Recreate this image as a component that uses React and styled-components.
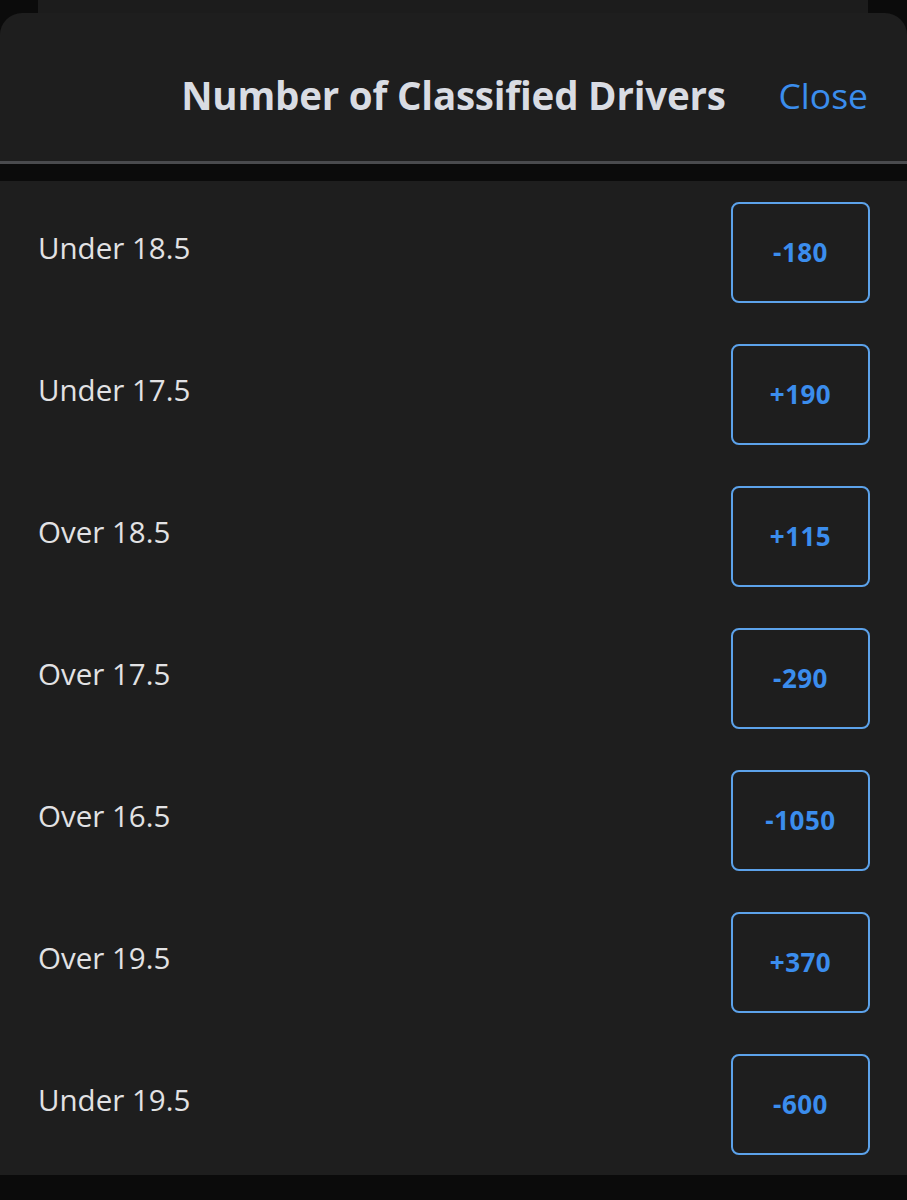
import React from "react";
import styled, {createGlobalStyle} from "styled-components";

const GlobalStyle = createGlobalStyle`
    html, body {
        margin: 0;
        padding: 0;
        background: #0b0b0b;
    }
    body {
        font-family: "Open Sans", "Noto Sans", sans-serif;
        -webkit-font-smoothing: antialiased;
    }
`;

const markets = [
    {label: "Under 18.5", odds: "-180"},
    {label: "Under 17.5", odds: "+190"},
    {label: "Over 18.5", odds: "+115"},
    {label: "Over 17.5", odds: "-290"},
    {label: "Over 16.5", odds: "-1050"},
    {label: "Over 19.5", odds: "+370"},
    {label: "Under 19.5", odds: "-600"},
];

function App() {
    return (
        <>
            <GlobalStyle />
            <Page>
                <BackSheet />
                <Sheet>
                    <Header>
                        <Title>Number of Classified Drivers</Title>
                        <CloseButton>Close</CloseButton>
                    </Header>
                    <Divider />
                    <List>
                        {markets.map((m) => (
                            <Row key={m.label}>
                                <Label>{m.label}</Label>
                                <OddsButton>{m.odds}</OddsButton>
                            </Row>
                        ))}
                    </List>
                </Sheet>
            </Page>
        </>
    );
}

const Page = styled.div`
    width: 907px;
    height: 1200px;
    background: #0b0b0b;
    overflow: hidden;
    display: flex;
    flex-direction: column;
`;

const BackSheet = styled.div`
    height: 13px;
    margin: 0 39px 0 38px;
    background: #1c1c1c;
    flex-shrink: 0;
`;

const Sheet = styled.div`
    background: #1e1e1e;
    border-radius: 22px 22px 0 0;
    display: flex;
    flex-direction: column;
`;

const Header = styled.div`
    height: 151px;
    box-sizing: border-box;
    padding-top: 16px;
    position: relative;
    display: flex;
    align-items: center;
    justify-content: center;
    border-bottom: 3px solid #4a4b4e;
`;

const Title = styled.h1`
    margin: 0;
    font-size: 38.5px;
    font-weight: 700;
    color: #d9dce3;
    letter-spacing: -0.2px;
`;

const CloseButton = styled.span`
    position: absolute;
    right: 39px;
    top: calc(50% + 8px);
    transform: translateY(-50%);
    font-size: 35.5px;
    color: #3b8ded;
`;

const Divider = styled.div`
    height: 17px;
    background: #0b0b0b;
`;

const List = styled.div`
    display: flex;
    flex-direction: column;
`;

const Row = styled.div`
    height: 142px;
    display: flex;
    align-items: center;
    justify-content: space-between;
    padding: 0 37px 0 38px;
`;

const Label = styled.span`
    font-size: 29.5px;
    color: #e2e2e4;
    margin-top: -9px;
`;

const OddsButton = styled.button`
    width: 139px;
    height: 101px;
    box-sizing: border-box;
    background: transparent;
    border: 2px solid #5ca2ea;
    border-radius: 8px;
    font-family: inherit;
    font-size: 26px;
    font-weight: 700;
    letter-spacing: 0.5px;
    color: #3b8ded;
    padding: 0;
`;

export default App;
